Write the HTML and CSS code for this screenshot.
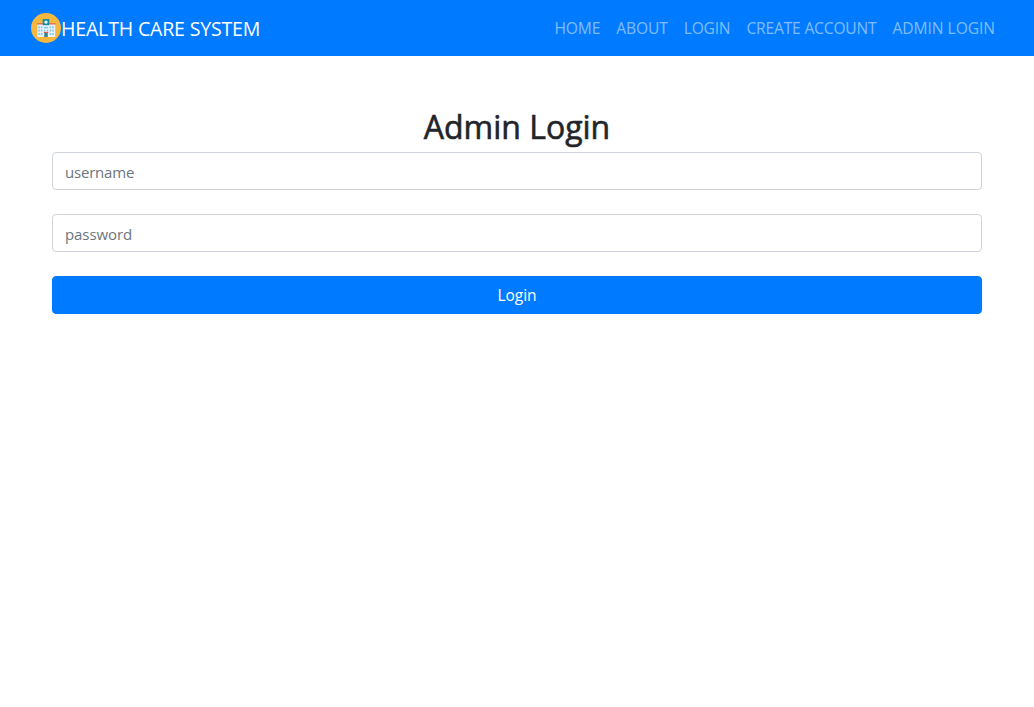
FILE: index.html
```html
<!DOCTYPE html>
<html lang="en">
<head>
<meta charset="utf-8">
<title>Admin Login</title>
<link rel="stylesheet" href="styles.css">
</head>
<body>
<nav class="navbar">
  <a class="brand">
    <svg class="logo" viewBox="0 0 30 30" width="30" height="30">
      <circle cx="15" cy="15" r="15" fill="#f6b73f"/>
      <path d="M6.300 11h17.900v13H6.300z" fill="#eaf3f8"/>
      <path d="M11.800 11h6.400v13h-6.400z" fill="#f7fafc"/>
      <path d="M6 10.200h5.800v1.200H6zM18.200 10.200H24.500v1.200h-6.300z" fill="#e0604f"/>
      <path d="M11.700 6h6.600v6.300h-6.600z" fill="#168ca3"/>
      <path d="M14.400 7.400h1.200v1.200h1.200v1.200h-1.200v1.200h-1.200V9.800h-1.200V8.600h1.200z" fill="#fff"/>
      <path d="M7.300 13.300h1.600v2H7.300zM9.800 13.300h1.600v2H9.800zM12.700 13.800h4.600v1.600h-4.600zM18.600 13.300h1.600v2h-1.600zM21.200 13.300h1.600v2h-1.600zM7.300 16.600h1.600v2H7.300zM9.800 16.600h1.600v2H9.800zM12.700 16.600h1.600v1.600h-1.600zM15.700 16.600h1.600v1.600h-1.600zM18.600 16.600h1.600v2h-1.600zM21.200 16.600h1.600v2h-1.600zM7.300 20h1.600v2H7.300zM9.800 20h1.600v2H9.800zM18.600 20h1.600v2h-1.600zM21.200 20h1.600v2h-1.600z" fill="#83c7ef"/>
      <path d="M12.700 18.800h4.600v1.300h-4.600z" fill="#e0604f"/>
      <path d="M13.200 20.100h3.600V24h-3.600z" fill="#33869a"/>
    </svg><span class="brand-name">HEALTH CARE SYSTEM</span>
  </a>
  <div class="links">
    <a class="link">HOME</a>
    <a class="link">ABOUT</a>
    <a class="link link-login">LOGIN</a>
    <a class="link link-create">CREATE ACCOUNT</a>
    <a class="link link-admin">ADMIN LOGIN</a>
  </div>
</nav>
<main class="page">
  <h1 class="title">Admin Login</h1>
  <form class="form">
    <input class="field username" type="text" placeholder="username">
    <input class="field password" type="password" placeholder="password">
    <button class="submit" type="button">Login</button>
  </form>
</main>
</body>
</html>
```

FILE: styles.css
```css
* { box-sizing: border-box; }
body {
  margin: 0;
  background: #fff;
  color: #212529;
  font: 400 16px/24px "Open Sans", "Noto Sans", sans-serif;
}
.navbar {
  display: flex;
  align-items: center;
  justify-content: space-between;
  height: 56px;
  padding: 0 31px;
  background: #007bff;
}
.brand { display: flex; align-items: center; color: #fff; }
.logo { display: block; }
.brand-name {
  padding-top: 1px;
  font: 400 19.600px/30px "Open Sans", sans-serif;
  letter-spacing: -.2px;
  white-space: nowrap;
}
.links { display: flex; }
.link {
  padding: 8px;
  font-size: 15.600px;
  letter-spacing: -.12px;
  white-space: nowrap;
  color: rgba(255, 255, 255, .5);
}
.link-login { letter-spacing: -.2px; }
.link-create { letter-spacing: -.18px; }
.link-admin { letter-spacing: -.05px; }
.page { padding: 52px 52px 0; }
.title {
  margin: 0 0 6px;
  font: 500 32px/38px "Open Sans", sans-serif;
  -webkit-text-stroke: .6px #212529;
  text-align: center;
}
.form { display: flex; flex-direction: column; gap: 24px; }
.field {
  height: 38px;
  padding: 8px 12px 6px;
  border: 1px solid #ced4da;
  border-radius: 4px;
  font: 400 15px/24px "Open Sans", sans-serif;
  background: #fff;
}
.username { letter-spacing: -.2px; }
.password { letter-spacing: -.08px; }
.field::placeholder { color: #6c757d; opacity: 1; }
.submit {
  height: 38px;
  padding: 0 12px;
  border: 1px solid #007bff;
  border-radius: 4px;
  background: #007bff;
  color: #fff;
  font: 400 15.500px/24px "Open Sans", sans-serif;
}
```
